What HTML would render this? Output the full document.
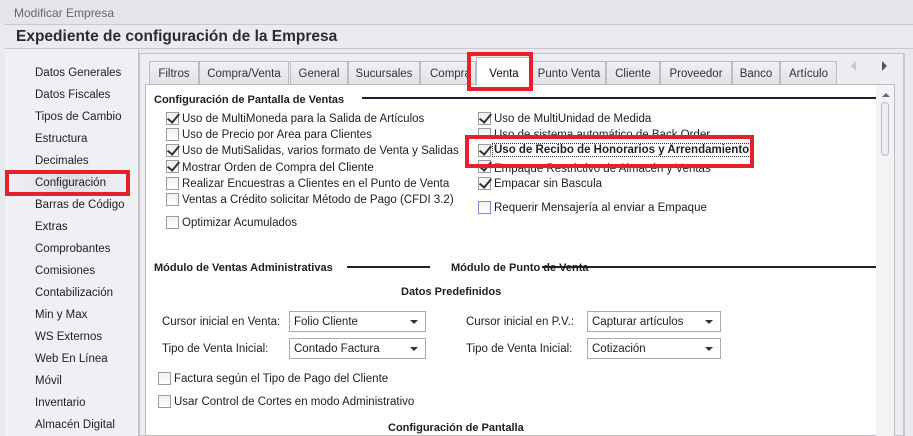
<!DOCTYPE html>
<html><head><meta charset="utf-8"><style>
*{margin:0;padding:0;box-sizing:border-box}
body{width:913px;height:436px;overflow:hidden;background:#e9eaee;font-family:"Liberation Sans",sans-serif;font-size:11.5px;color:#1e1e1e;position:relative}
.a{position:absolute;white-space:nowrap}
.t{margin-top:2px}
.nav{position:absolute;left:35px;font-size:11.5px;margin-top:2px}
.tab{position:absolute;top:61px;height:24px;background:linear-gradient(#eef0f4,#e0e2e8);border:1px solid #b9bcc5;border-bottom:none;text-align:center;line-height:24px;font-size:11.5px;color:#333}
.cb{position:absolute;width:13px;height:13px;border:1px solid #9a9ca3;background:linear-gradient(#f0f0f0,#fff)}
.ck::after{content:"";position:absolute;left:3px;top:-2px;width:5px;height:10px;border:solid #333;border-width:0 2px 2px 0;transform:rotate(40deg)}
.bold{font-weight:bold;font-size:11px}
.dd{position:absolute;height:21px;border:1px solid #a9abb2;background:#fff;padding-left:4px;line-height:20px}
.dd::after{content:"";position:absolute;right:7px;top:8px;border:4px solid transparent;border-top:4px solid #333;border-bottom:none}
.line{position:absolute;height:2px;background:#1f1d33}
.red{position:absolute;border:4px solid #e8202a}
</style></head><body>
<div class="a" style="left:0;top:0;width:913px;height:24px;background:#e4e5e9"></div>
<div class="a" style="left:14px;top:6px;color:#666;font-size:12px">Modificar Empresa</div>
<div class="a" style="left:5px;top:24px;width:908px;height:25px;background:#eaebef;border-top:1px solid #c8c9ce;border-bottom:1px solid #c8c9ce"></div>
<div class="a" style="left:16px;top:28px;font-size:15.5px;font-weight:bold;color:#2a2a33">Expediente de configuración de la Empresa</div>
<div class="a" style="left:5px;top:49px;width:134px;height:387px;background:#eff0f4;border-right:1px solid #c0c2c8"></div>
<div class="nav" style="top:65px">Datos Generales</div>
<div class="nav" style="top:87px">Datos Fiscales</div>
<div class="nav" style="top:109px">Tipos de Cambio</div>
<div class="nav" style="top:131px">Estructura</div>
<div class="nav" style="top:153px">Decimales</div>
<div class="a" style="left:10px;top:174px;width:115px;height:20px;background:linear-gradient(90deg,#eff0f4,#dcdde3,#eff0f4)"></div>
<div class="nav" style="top:175px">Configuración</div>
<div class="nav" style="top:197px">Barras de Código</div>
<div class="nav" style="top:219px">Extras</div>
<div class="nav" style="top:241px">Comprobantes</div>
<div class="nav" style="top:263px">Comisiones</div>
<div class="nav" style="top:285px">Contabilización</div>
<div class="nav" style="top:307px">Min y Max</div>
<div class="nav" style="top:329px">WS Externos</div>
<div class="nav" style="top:351px">Web En Línea</div>
<div class="nav" style="top:373px">Móvil</div>
<div class="nav" style="top:395px">Inventario</div>
<div class="nav" style="top:417px">Almacén Digital</div>
<div class="red" style="left:5px;top:170px;width:125px;height:26px"></div>

<div class="a" style="left:139px;top:53px;width:766px;height:383px;background:#eceef2;border:1px solid #c0c2c8;border-right:2px solid #c6c8ce"></div>
<div class="tab" style="left:149px;width:50px">Filtros</div>
<div class="tab" style="left:199px;width:90px">Compra/Venta</div>
<div class="tab" style="left:290px;width:58px">General</div>
<div class="tab" style="left:348px;width:72px">Sucursales</div>
<div class="tab" style="left:420px;width:56px;text-align:left;padding-left:9px;overflow:hidden">Compra</div>
<div class="tab" style="left:532px;width:74px">Punto Venta</div>
<div class="tab" style="left:606px;width:54px">Cliente</div>
<div class="tab" style="left:660px;width:72px">Proveedor</div>
<div class="tab" style="left:732px;width:48px">Banco</div>
<div class="tab" style="left:780px;width:57px">Artículo</div>
<div class="a" style="left:851px;top:61px;border:5px solid transparent;border-right:5px solid #c8c9ce;border-left:none"></div>
<div class="a" style="left:882px;top:61px;border:5px solid transparent;border-left:5px solid #555;border-right:none"></div>
<div class="a" style="left:145px;top:84px;width:750px;height:352px;background:#fff;border:1px solid #b9bcc5"></div>
<div class="tab" style="left:476px;top:57px;width:56px;height:29px;background:#fff;line-height:32px;color:#111">Venta</div>
<div class="red" style="left:467px;top:52px;width:66px;height:39px"></div>
<div class="a" style="left:876px;top:85px;width:18px;height:351px;background:#f3f3f6"></div>
<div class="a" style="left:882px;top:93px;border:4px solid transparent;border-bottom:4px solid #666;border-top:none"></div>
<div class="a" style="left:881px;top:102px;width:8px;height:54px;border:1px solid #b9bbc2;border-radius:4px;background:#eceef1"></div>

<div class="a bold t" style="left:154px;top:92px">Configuración de Pantalla de Ventas</div>
<div class="line" style="left:362px;top:97px;width:514px"></div>

<div class="cb ck" style="left:166px;top:112px"></div><div class="a t" style="left:182px;top:111px">Uso de MultiMoneda para la Salida de Artículos</div>
<div class="cb" style="left:166px;top:128px"></div><div class="a t" style="left:182px;top:127px">Uso de Precio por Area para Clientes</div>
<div class="cb ck" style="left:166px;top:144px"></div><div class="a t" style="left:182px;top:143px">Uso de MutiSalidas, varios formato de Venta y Salidas</div>
<div class="cb ck" style="left:166px;top:160px"></div><div class="a t" style="left:182px;top:160px">Mostrar Orden de Compra del Cliente</div>
<div class="cb" style="left:166px;top:177px"></div><div class="a t" style="left:182px;top:176px">Realizar Encuestras a Clientes en el Punto de Venta</div>
<div class="cb" style="left:166px;top:193px"></div><div class="a t" style="left:182px;top:192px">Ventas a Crédito solicitar Método de Pago (CFDI 3.2)</div>
<div class="cb" style="left:166px;top:216px"></div><div class="a t" style="left:182px;top:215px">Optimizar Acumulados</div>

<div class="cb ck" style="left:478px;top:112px"></div><div class="a t" style="left:494px;top:111px">Uso de MultiUnidad de Medida</div>
<div class="cb" style="left:478px;top:128px"></div><div class="a t" style="left:494px;top:127px">Uso de sistema automático de Back Order</div>
<div class="cb ck" style="left:478px;top:160px"></div><div class="a t" style="left:494px;top:161px">Empaque Restrictivo de Almacén y Ventas</div>
<div class="a" style="left:470px;top:137px;width:280px;height:23px;background:#fff"></div>
<div class="cb ck" style="left:478px;top:144px"></div><div class="a t" style="left:493px;top:142px;outline:1px dotted #333;padding:0 1px;font-weight:bold;font-size:11.5px">Uso de Recibo de Honorarios y Arrendamiento</div>
<div class="cb ck" style="left:478px;top:177px"></div><div class="a t" style="left:494px;top:176px">Empacar sin Bascula</div>
<div class="cb" style="left:478px;top:201px;border-color:#7d8fc0"></div><div class="a t" style="left:494px;top:200px">Requerir Mensajería al enviar a Empaque</div>
<div class="red" style="left:465px;top:135px;width:289px;height:33px"></div>

<div class="a bold t" style="left:154px;top:260px">Módulo de Ventas Administrativas</div>
<div class="line" style="left:347px;top:266px;width:83px"></div>
<div class="a bold t" style="left:451px;top:260px">Módulo de Punto de Venta</div>
<div class="line" style="left:542px;top:266px;width:334px"></div>
<div class="a bold t" style="left:401px;top:284px">Datos Predefinidos</div>

<div class="a t" style="left:162px;top:314px">Cursor inicial en Venta:</div>
<div class="dd" style="left:289px;top:311px;width:137px">Folio Cliente</div>
<div class="a t" style="left:162px;top:341px">Tipo de Venta Inicial:</div>
<div class="dd" style="left:289px;top:338px;width:137px">Contado Factura</div>
<div class="a t" style="left:466px;top:314px">Cursor inicial en P.V.:</div>
<div class="dd" style="left:587px;top:311px;width:134px">Capturar artículos</div>
<div class="a t" style="left:466px;top:341px">Tipo de Venta Inicial:</div>
<div class="dd" style="left:587px;top:338px;width:134px">Cotización</div>

<div class="cb" style="left:158px;top:372px"></div><div class="a t" style="left:174px;top:371px">Factura según el Tipo de Pago del Cliente</div>
<div class="cb" style="left:158px;top:395px"></div><div class="a t" style="left:174px;top:394px">Usar Control de Cortes en modo Administrativo</div>
<div class="a bold t" style="left:388px;top:420px">Configuración de Pantalla</div>
</body></html>
